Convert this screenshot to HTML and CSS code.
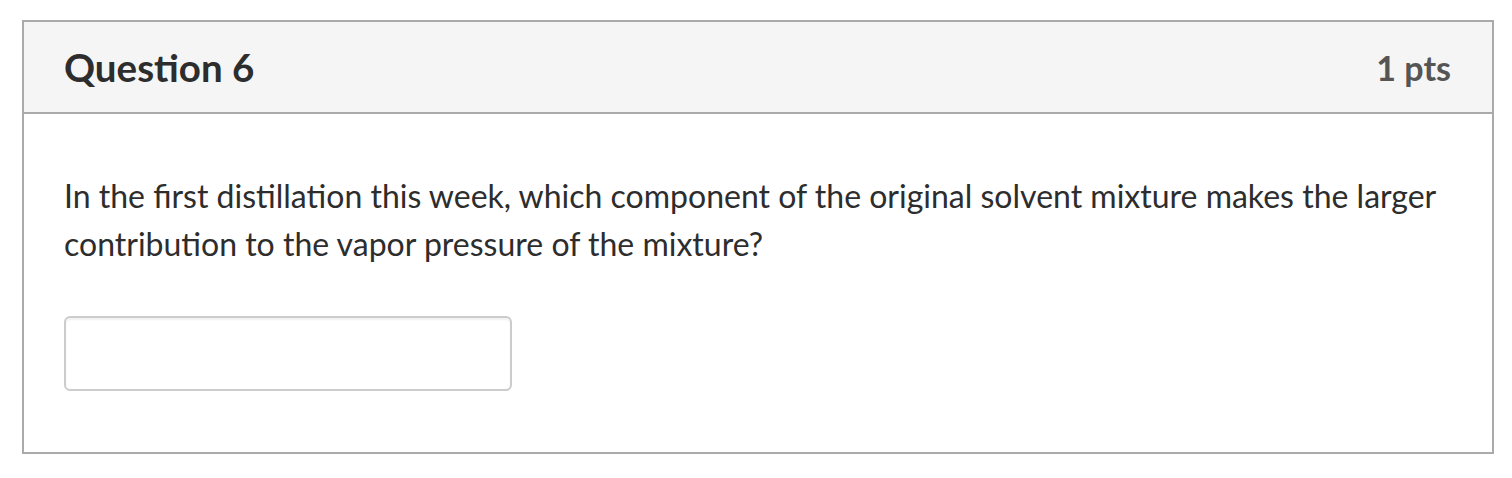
FILE: index.html
```html
<!DOCTYPE html>
<html lang="en">
<head>
<meta charset="utf-8">
<title>Question 6</title>
<link rel="stylesheet" href="styles.css">
</head>
<body>
<div class="question">
  <div class="question-header">
    <h2 class="question-name">Question 6</h2>
    <span class="question-points">1 pts</span>
  </div>
  <div class="question-body">
    <p class="question-text">In the first distillation this week, which component of the original solvent mixture makes the larger contribution to the vapor pressure of the mixture?</p>
    <input class="answer-input" type="text" aria-label="Answer">
  </div>
</div>
</body>
</html>
```

FILE: styles.css
```css
html, body {
  margin: 0;
  padding: 0;
  background: #ffffff;
}
body {
  font-family: Lato, "Open Sans", "Liberation Sans", sans-serif;
  color: #2d2d2d;
  padding: 20px 18px 0 22px;
}
.question {
  width: 1472px;
  box-sizing: border-box;
  border: 2px solid #aaaaaa;
  background: #ffffff;
}
.question-header {
  display: flex;
  align-items: center;
  justify-content: space-between;
  height: 90px;
  padding: 0 41px 0 40px;
  background: #f5f5f5;
  border-bottom: 2px solid #aaaaaa;
}
.question-name {
  margin: 0;
  font-size: 38.5px;
  font-weight: 700;
  color: #2d2d2d;
}
.question-points {
  font-size: 34px;
  font-weight: 700;
  color: #555555;
}
.question-body {
  padding: 58px 40px 61px 40px;
}
.question-text {
  margin: 0 0 48px 0;
  font-size: 32px;
  line-height: 48px;
  color: #2d2d2d;
}
.answer-input {
  display: block;
  box-sizing: border-box;
  width: 448px;
  height: 75px;
  margin: 0;
  border: 2px solid #cccccc;
  border-radius: 6px;
  background: #ffffff;
  box-shadow: inset 0 2px 2px rgba(0,0,0,0.06);
  font-family: inherit;
  font-size: 32px;
  outline: none;
}
```
